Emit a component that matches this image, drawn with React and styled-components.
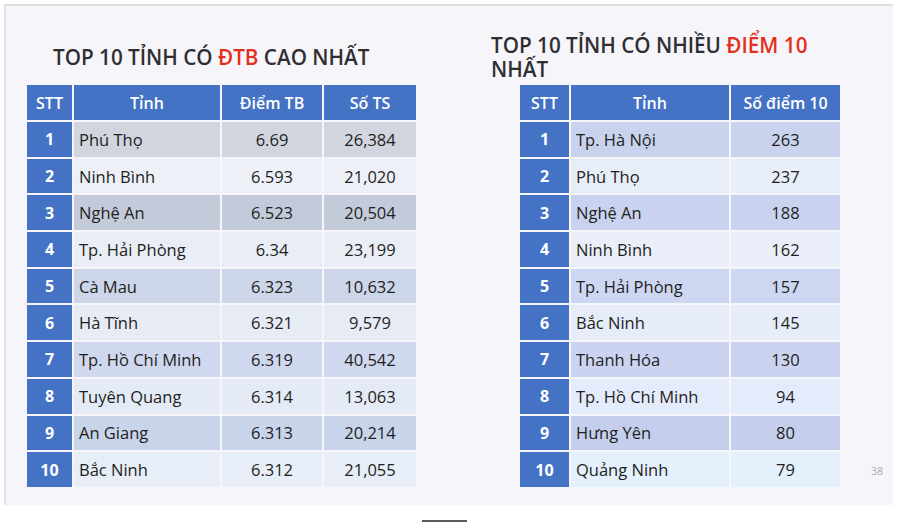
import React from 'react';
import styled, { createGlobalStyle } from 'styled-components';

const GlobalStyle = createGlobalStyle`
  html, body {
    margin: 0;
    padding: 0;
    background: #ffffff;
    font-family: 'Open Sans', 'Noto Sans', sans-serif;
  }
`;

// data for both tables
const avgRows = [
  { name: 'Phú Thọ', avg: '6.69', count: '26,384', bg: '#d1d5dd' },
  { name: 'Ninh Bình', avg: '6.593', count: '21,020', bg: '#edf0f6' },
  { name: 'Nghệ An', avg: '6.523', count: '20,504', bg: '#c3cbdb' },
  { name: 'Tp. Hải Phòng', avg: '6.34', count: '23,199', bg: '#e9edf5' },
  { name: 'Cà Mau', avg: '6.323', count: '10,632', bg: '#cdd5e8' },
  { name: 'Hà Tĩnh', avg: '6.321', count: '9,579', bg: '#e6ebf4' },
  { name: 'Tp. Hồ Chí Minh', avg: '6.319', count: '40,542', bg: '#cfd8ee' },
  { name: 'Tuyên Quang', avg: '6.314', count: '13,063', bg: '#e4ebf7' },
  { name: 'An Giang', avg: '6.313', count: '20,214', bg: '#c7d4ea' },
  { name: 'Bắc Ninh', avg: '6.312', count: '21,055', bg: '#e7eef7' },
];

const tenRows = [
  { name: 'Tp. Hà Nội', count: '263', bg: '#cad3ee' },
  { name: 'Phú Thọ', count: '237', bg: '#e8eef8' },
  { name: 'Nghệ An', count: '188', bg: '#c9d3ef' },
  { name: 'Ninh Bình', count: '162', bg: '#e9eef8' },
  { name: 'Tp. Hải Phòng', count: '157', bg: '#cdd7f1' },
  { name: 'Bắc Ninh', count: '145', bg: '#e6edf9' },
  { name: 'Thanh Hóa', count: '130', bg: '#cbd3f1' },
  { name: 'Tp. Hồ Chí Minh', count: '94', bg: '#e4ecfb' },
  { name: 'Hưng Yên', count: '80', bg: '#c6ceed' },
  { name: 'Quảng Ninh', count: '79', bg: '#e4f0fb' },
];

const Page = styled.div`
  width: 900px;
  height: 526px;
  position: relative;
  overflow: hidden;
  background: #ffffff;
`;

const Slide = styled.div`
  margin: 4px 0 0 4px;
  width: 889px;
  height: 501px;
  box-sizing: border-box;
  border-top: 2px solid #dedde2;
  border-left: 2px solid #e2e1e6;
  background: #f6f5f9;
  display: flex;
  padding-left: 21px;
  position: relative;
`;

const Column = styled.div`
  display: flex;
  flex-direction: column;
  width: ${p => p.width}px;
  margin-left: ${p => p.offset || 0}px;
`;

const TitleBox = styled.div`
  height: 48px;
  margin-top: 27px;
  margin-bottom: 4px;
  display: flex;
  align-items: center;
  padding-left: ${p => p.indent}px;
`;

const Title = styled.h2`
  margin: 0;
  font-family: 'Open Sans', 'Noto Sans', sans-serif;
  font-weight: 600;
  font-size: 20.7px;
  line-height: 24px;
  color: #2f2f33;
  width: ${p => p.width || 'auto'};
`;

const Red = styled.span`
  color: #e3301c;
`;

const Table = styled.div`
  display: grid;
  grid-template-columns: ${p => p.cols};
  grid-template-rows: 35px;
  grid-auto-rows: 34.7px;
  column-gap: 2px;
  row-gap: 2px;
  margin-left: ${p => p.offset || 0}px;
  width: ${p => p.width}px;
`;

const HeadCell = styled.div`
  background: #4472c4;
  color: #ffffff;
  font-family: 'Open Sans', 'Noto Sans', sans-serif;
  font-weight: 600;
  font-size: 16px;
  display: flex;
  align-items: center;
  justify-content: center;
`;

const IndexCell = styled.div`
  background: #4472c4;
  color: #ffffff;
  font-weight: 700;
  font-size: 16px;
  display: flex;
  align-items: center;
  justify-content: center;
`;

const Cell = styled.div`
  background: ${p => p.bg};
  color: #1f1f22;
  font-size: 16.5px;
  display: flex;
  align-items: center;
  justify-content: ${p => (p.left ? 'flex-start' : 'center')};
  padding-left: ${p => (p.left ? '5px' : '0')};
`;

const PageNumber = styled.div`
  position: absolute;
  right: 10px;
  bottom: 27px;
  font-size: 10.5px;
  color: #a9a9ae;
`;

const ScrollMark = styled.div`
  position: absolute;
  left: 422px;
  top: 520px;
  width: 45px;
  height: 2px;
  background: #5a5a5e;
`;

export default function App() {
  return (
    <Page>
      <GlobalStyle />
      <Slide>
        <Column width={389}>
          <TitleBox indent={26}>
            <Title>
              TOP 10 TỈNH CÓ <Red>ĐTB</Red> CAO NHẤT
            </Title>
          </TitleBox>
          <Table cols="45px 146px 100px 92px" width={389}>
            <HeadCell>STT</HeadCell>
            <HeadCell>Tỉnh</HeadCell>
            <HeadCell>Điểm TB</HeadCell>
            <HeadCell>Số TS</HeadCell>
            {avgRows.map((r, i) => (
              <React.Fragment key={r.name}>
                <IndexCell>{i + 1}</IndexCell>
                <Cell bg={r.bg} left>{r.name}</Cell>
                <Cell bg={r.bg}>{r.avg}</Cell>
                <Cell bg={r.bg}>{r.count}</Cell>
              </React.Fragment>
            ))}
          </Table>
        </Column>
        <Column width={360} offset={75}>
          <TitleBox indent={0}>
            <Title width="345px">
              TOP 10 TỈNH CÓ NHIỀU <Red>ĐIỂM 10</Red> NHẤT
            </Title>
          </TitleBox>
          <Table cols="49px 158px 109px" width={320} offset={29}>
            <HeadCell>STT</HeadCell>
            <HeadCell>Tỉnh</HeadCell>
            <HeadCell>Số điểm 10</HeadCell>
            {tenRows.map((r, i) => (
              <React.Fragment key={r.name + i}>
                <IndexCell>{i + 1}</IndexCell>
                <Cell bg={r.bg} left>{r.name}</Cell>
                <Cell bg={r.bg}>{r.count}</Cell>
              </React.Fragment>
            ))}
          </Table>
        </Column>
        <PageNumber>38</PageNumber>
      </Slide>
      <ScrollMark />
    </Page>
  );
}
